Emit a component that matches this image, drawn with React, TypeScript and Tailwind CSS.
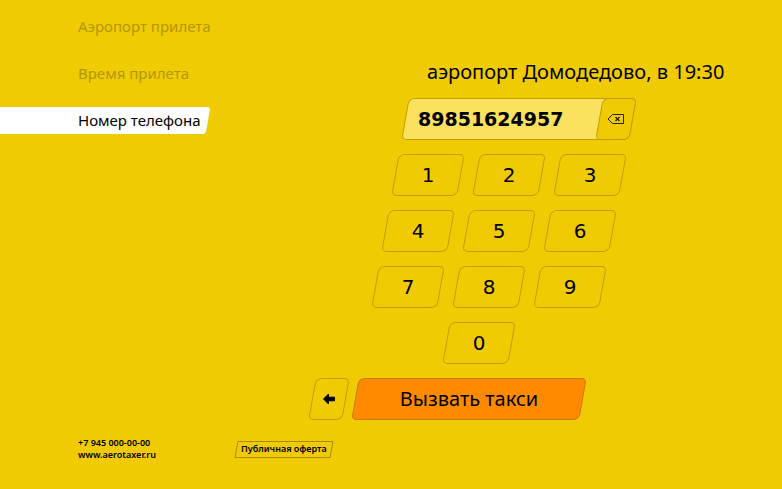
import React, { useState } from "react";
import clsx from "clsx";

const steps = ["Аэропорт прилета", "Время прилета", "Номер телефона"];

// every next row sits 10px to the left, along the slant of the keys
const keyRows = [
  { keys: ["1", "2", "3"], indent: "ml-[83px]" },
  { keys: ["4", "5", "6"], indent: "ml-[73px]" },
  { keys: ["7", "8", "9"], indent: "ml-[63px]" },
  { keys: ["0"], indent: "ml-[53px]" },
];

// slanted outline drawn behind upright content
const slanted =
  "relative isolate before:absolute before:inset-0 before:-z-10 before:-skew-x-10 before:border";
const rounded = "before:rounded-tl-md before:rounded-tr-[5px] before:rounded-br-md before:rounded-bl-[5px]";

type KeyProps = {
  label?: string;
  className?: string;
  onClick?: () => void;
  children: React.ReactNode;
};

const Key: React.FC<KeyProps> = ({ label, className, onClick, children }) => (
  <button
    type="button"
    aria-label={label}
    onClick={onClick}
    className={clsx(slanted, rounded, "flex h-[42px] cursor-pointer items-center justify-center text-xl", className)}
  >
    {children}
  </button>
);

const App: React.FC = () => {
  const [phone, setPhone] = useState("89851624957");

  return (
    <div className="flex min-h-screen flex-col overflow-x-hidden bg-[#f0cb04] font-['Noto_Sans',sans-serif] text-black">
      <div className="grid grid-cols-[39.9%_1fr]">
        {/* Steps */}
        <nav className="flex flex-col items-start gap-5 pt-[13px] text-[15px]">
          {steps.map((step, i) => (
            <a
              key={step}
              href="#"
              className={clsx(
                "flex h-[27px] items-center pr-[7px] pl-[78px]",
                i === steps.length - 1
                  ? "relative isolate before:absolute before:inset-y-0 before:-left-3 before:right-0 before:-z-10 before:-skew-x-10 before:rounded-[3px] before:bg-white"
                  : "text-[#b39706]"
              )}
            >
              {step}
            </a>
          ))}
        </nav>

        {/* Phone form */}
        <main className="flex flex-col gap-[14px] pt-[60px]">
          <h1 className="ml-[115px] h-6 text-xl leading-6 whitespace-nowrap">аэропорт Домодедово, в 19:30</h1>

          <div className={clsx(slanted, rounded, "ml-[93px] flex h-[42px] w-[228px] before:border-[#bfa004] before:bg-[#fbe15e]")}>
            <input
              type="tel"
              aria-label="Номер телефона"
              value={phone}
              onChange={(e) => setPhone(e.target.value)}
              className="min-w-0 flex-1 bg-transparent pl-[13px] font-['DejaVu_Sans',sans-serif] text-[19px] font-bold outline-none"
            />
            <Key
              label="Стереть"
              className="w-[34px] before:border-[#bfa004] before:bg-[#f0cb04]"
              onClick={() => setPhone(phone.slice(0, -1))}
            >
              <svg width="18" height="12" viewBox="0 0 18 12" fill="none" stroke="#2b2400">
                <path d="M5.5 1.5h11v9h-11L1 6z" />
                <path d="M8.5 4l4 4M12.5 4l-4 4" strokeWidth="1.3" />
              </svg>
            </Key>
          </div>

          {keyRows.map(({ keys, indent }) => (
            <div
              key={keys[0]}
              className={clsx("flex w-[228px] justify-center gap-[15px] font-['DejaVu_Sans',sans-serif]", indent)}
            >
              {keys.map((digit) => (
                <Key key={digit} className="w-[66px] before:border-[#bfa004]" onClick={() => setPhone(phone + digit)}>
                  {digit}
                </Key>
              ))}
            </div>
          ))}

          <div className="flex gap-[9px]">
            <Key label="Назад" className="w-[34px] before:border-[#bfa004]">
              <svg width="12" height="12" viewBox="0 0 12 12" stroke="#000" strokeLinejoin="round">
                <path d="M0.5 6L5.5 1V4.2h6v3.6h-6V11z" />
              </svg>
            </Key>
            <Key className="w-[228px] before:border-[#c57a08] before:bg-[#ff8a00]">Вызвать такси</Key>
          </div>
        </main>
      </div>

      {/* Contacts */}
      <footer className="mt-auto flex items-center gap-20 pb-7 pl-[78px] text-[9px] leading-3 font-semibold">
        <address className="not-italic">
          <p>+7 945 000-00-00</p>
          <p>
            <a href="#">www.aerotaxer.ru</a>
          </p>
        </address>
        <a
          href="#"
          className={clsx(slanted, "flex h-[17px] items-center px-[5px] before:rounded-[1px] before:border-[#a98e05]")}
        >
          Публичная оферта
        </a>
      </footer>
    </div>
  );
};

export default App;
